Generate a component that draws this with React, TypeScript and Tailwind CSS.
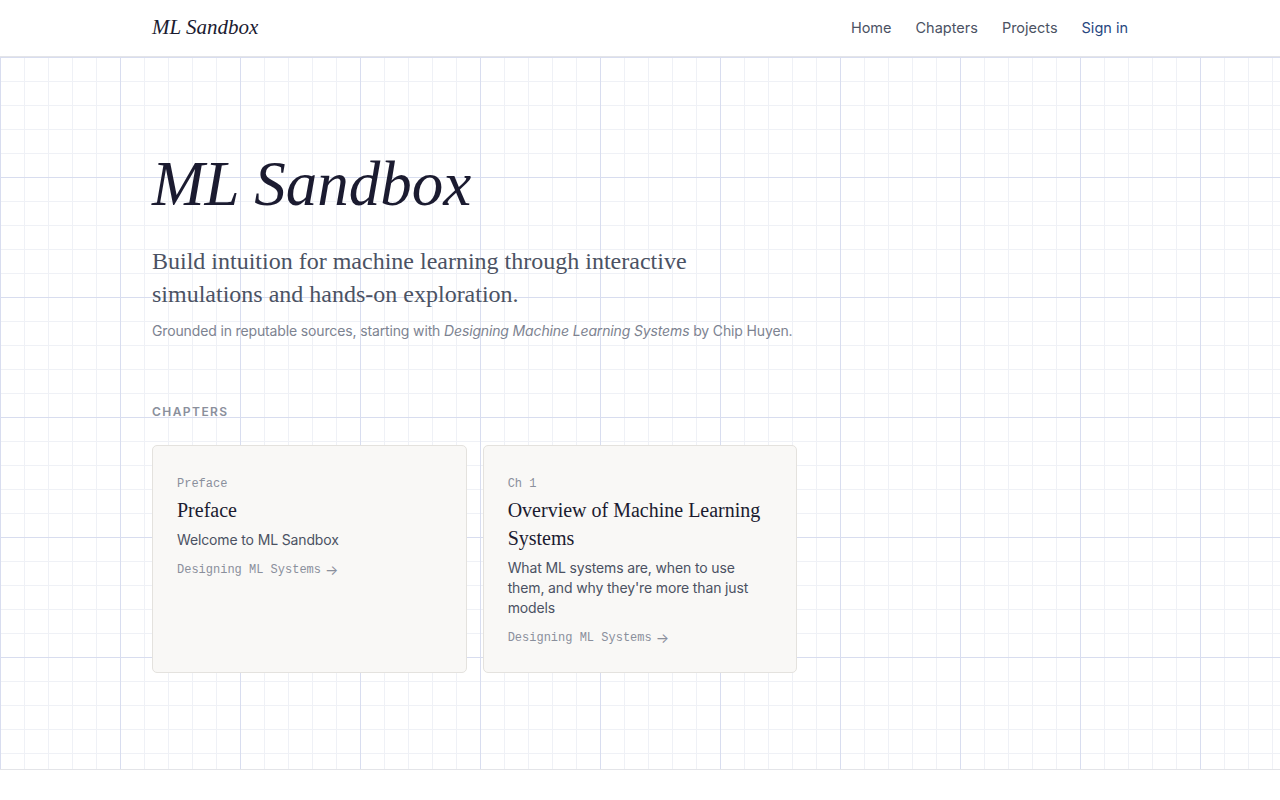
const serif = { fontFamily: '"Liberation Serif", "Times New Roman", serif' };

type Chapter = {
  label: string;
  title: string;
  description: string;
  source: string;
};

const chapters: Chapter[] = [
  {
    label: 'Preface',
    title: 'Preface',
    description: 'Welcome to ML Sandbox',
    source: 'Designing ML Systems',
  },
  {
    label: 'Ch 1',
    title: 'Overview of Machine Learning Systems',
    description: "What ML systems are, when to use them, and why they're more than just models",
    source: 'Designing ML Systems',
  },
];

function Header() {
  return (
    <header className="h-[57px] border-b border-[#e3e4e8] bg-white">
      <div className="max-w-[976px] mx-auto h-full flex items-center justify-between">
        <a className="text-[21px] italic text-[#1b1b30] font-['Liberation_Serif',serif]">ML Sandbox</a>
        <nav className="flex items-center gap-6 text-[14.5px] text-[#4b5263]">
          <a>Home</a>
          <a>Chapters</a>
          <a>Projects</a>
          <a className="text-[#28487f]">Sign in</a>
        </nav>
      </div>
    </header>
  );
}

function ChapterCard({ chapter }: { chapter: Chapter }) {
  return (
    <div className="rounded-[5px] border border-[#e4e2de] bg-[#f9f8f6] px-6 pt-[30px] pb-[26px]">
      <div className="font-['Liberation_Mono',monospace] text-xs leading-4 text-[#8a8f9c]">{chapter.label}</div>
      <h3 className="mt-[4px] text-[20px] leading-7 text-[#1b1b30]" style={serif}>
        {chapter.title}
      </h3>
      <p className="mt-[6px] text-sm leading-5 tracking-[-0.01em] text-[#4b5263]">{chapter.description}</p>
      <div className="mt-[12px] flex items-center gap-1 font-['Liberation_Mono',monospace] text-xs leading-4 text-[#8a8f9c]">
        <span>{chapter.source}</span>
        <span className="font-['Inter',sans-serif] text-sm leading-4">→</span>
      </div>
    </div>
  );
}

export default function App() {
  return (
    <div className="min-h-screen bg-white font-['Inter','Noto_Sans',sans-serif]">
      <Header />
      <main className="border-b border-[#e3e4e8] bg-[image:linear-gradient(to_right,#d8ddef_1px,transparent_1px),linear-gradient(to_bottom,#d8ddef_1px,transparent_1px),linear-gradient(to_right,#eff1f6_1px,transparent_1px),linear-gradient(to_bottom,#eff1f6_1px,transparent_1px)] bg-[size:120px_120px,120px_120px,24px_24px,24px_24px]">
        <div className="max-w-[976px] mx-auto pt-24 pb-24">
          <h1 className="text-[63px] leading-[62px] italic text-[#1b1b30]" style={serif}>
            ML Sandbox
          </h1>
          <p className="mt-[30px] max-w-[600px] text-[24px] leading-[33px] text-[#4b5263]" style={serif}>
            Build intuition for machine learning through interactive simulations and hands-on exploration.
          </p>
          <p className="mt-2 text-[14px] leading-6 tracking-[-0.01em] text-[#7d8391]">
            Grounded in reputable sources, starting with <em>Designing Machine Learning Systems</em> by Chip Huyen.
          </p>

          <h2 className="mt-[61px] text-xs leading-4 font-semibold tracking-[0.12em] uppercase text-[#8a8f9c]">
            Chapters
          </h2>
          <div className="mt-[25px] grid grid-cols-3 gap-4">
            {chapters.map(c => (
              <ChapterCard key={c.label} chapter={c} />
            ))}
          </div>
        </div>
      </main>
    </div>
  );
}
